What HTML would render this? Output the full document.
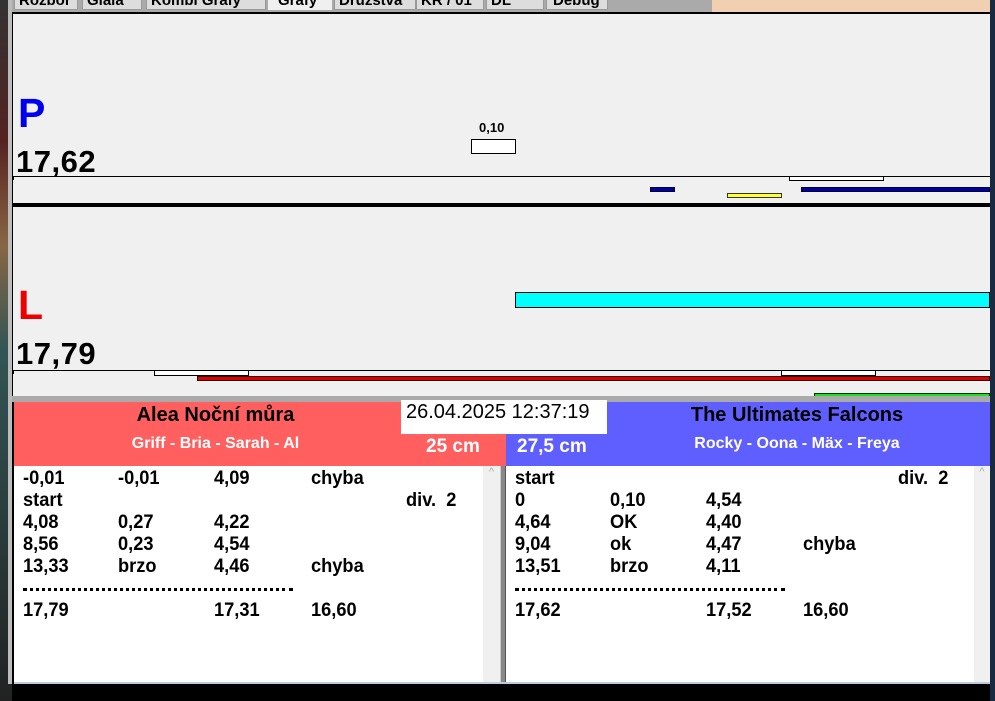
<!DOCTYPE html>
<html><head><meta charset="utf-8"><style>
*{margin:0;padding:0;box-sizing:border-box}
body{width:995px;height:701px;background:#000;position:relative;overflow:hidden;font-family:"Liberation Sans",Arial,sans-serif}
.a{position:absolute}
.b{font-weight:bold}
.row{position:absolute;font-weight:bold;font-size:19px;color:#000;white-space:nowrap;transform:scaleX(0.96);transform-origin:left}
</style></head><body>
<div class="a" style="left:0;top:0;width:12px;height:701px;background:linear-gradient(#333,#522 20%,#864 35%,#355 50%,#222)"></div>
<div class="a" style="left:8px;top:0;width:4px;height:684px;background:#bbb"></div>
<div class="a" style="left:12px;top:0;width:978px;height:12px;background:#aaa"></div>
<div class="a" style="left:712px;top:0;width:278px;height:12px;background:#f0d0b0"></div>
<div class="a" style="left:14px;top:0;width:698px;height:10px;font-size:15px;font-weight:bold;overflow:hidden">
<span class="a" style="left:0;top:-9px;width:64px;height:19px;background:#ddd;border:1px solid #999;padding-left:4px">Rozbor</span>
<span class="a" style="left:68px;top:-9px;width:60px;height:19px;background:#ddd;border:1px solid #999;padding-left:4px">Glala</span>
<span class="a" style="left:132px;top:-9px;width:120px;height:19px;background:#ddd;border:1px solid #999;padding-left:4px">Kombi Grafy</span>
<span class="a" style="left:254px;top:-8px;width:64px;height:20px;background:#f0f0f0;padding-left:10px">Grafy</span>
<span class="a" style="left:320px;top:-9px;width:82px;height:19px;background:#ddd;border:1px solid #999;padding-left:4px">Družstva</span>
<span class="a" style="left:402px;top:-9px;width:68px;height:19px;background:#ddd;border:1px solid #999;padding-left:4px">KR / 01</span>
<span class="a" style="left:472px;top:-9px;width:58px;height:19px;background:#ddd;border:1px solid #999;padding-left:4px">DL</span>
<span class="a" style="left:532px;top:-9px;width:62px;height:19px;background:#ddd;border:1px solid #999;padding-left:6px">Debug</span>
</div>
<div class="a" style="left:990px;top:0;width:5px;height:701px;background:#1a2a40"></div>
<!-- charts -->
<div class="a" style="left:12px;top:12px;width:978px;height:384px;background:#f0f0f0;border-top:2px solid #000;border-left:1px solid #000"></div>
<div class="a b" style="left:18px;top:89px;font-size:41px;color:#0000ee;line-height:48px">P</div>
<div class="a b" style="left:16px;top:144px;font-size:31px;line-height:36px;letter-spacing:0.5px">17,62</div>
<div class="a b" style="left:479px;top:120px;font-size:13px">0,10</div>
<div class="a" style="left:471px;top:139px;width:45px;height:15px;background:#fff;border:1px solid #000"></div>
<div class="a" style="left:13px;top:176px;width:977px;height:1px;background:#000"></div>
<div class="a" style="left:13px;top:176px;width:1px;height:4px;background:#000"></div>
<div class="a" style="left:789px;top:176px;width:95px;height:5px;background:#fff;border:1px solid #000"></div>
<div class="a" style="left:650px;top:187px;width:25px;height:5px;background:#0000aa;border:1px solid #002"></div>
<div class="a" style="left:801px;top:187px;width:189px;height:5px;background:#0000aa;border:1px solid #002"></div>
<div class="a" style="left:727px;top:193px;width:55px;height:5px;background:#ffff33;border:1px solid #333"></div>
<div class="a" style="left:12px;top:203px;width:978px;height:4px;background:#000"></div>
<div class="a b" style="left:18px;top:281px;font-size:41px;color:#ee0000;line-height:48px">L</div>
<div class="a b" style="left:16px;top:336px;font-size:31px;line-height:36px;letter-spacing:0.5px">17,79</div>
<div class="a" style="left:515px;top:292px;width:475px;height:16px;background:#00ffff;border:1px solid #000"></div>
<div class="a" style="left:13px;top:370px;width:977px;height:1px;background:#000"></div>
<div class="a" style="left:13px;top:370px;width:1px;height:4px;background:#000"></div>
<div class="a" style="left:154px;top:370px;width:95px;height:6px;background:#fff;border:1px solid #000"></div>
<div class="a" style="left:781px;top:370px;width:95px;height:6px;background:#fff;border:1px solid #000"></div>
<div class="a" style="left:197px;top:376px;width:793px;height:5px;background:#dd0000;border:1px solid #300"></div>
<div class="a" style="left:814px;top:393px;width:176px;height:5px;background:#22dd22;border:1px solid #030"></div>
<div class="a" style="left:12px;top:396px;width:978px;height:6px;background:#aaa"></div>
<!-- headers -->
<div class="a" style="left:14px;top:402px;width:492px;height:64px;background:#ff5f5f"></div>
<div class="a" style="left:506px;top:402px;width:484px;height:64px;background:#5f5fff"></div>
<div class="a b" style="left:14px;top:404px;width:403px;text-align:center;font-size:20px">Alea Noční můra</div>
<div class="a b" style="left:14px;top:435px;width:403px;text-align:center;font-size:16px;color:#fff">Griff - Bria - Sarah - Al</div>
<div class="a" style="left:401px;top:400px;width:206px;height:34px;background:#fff;font-size:20px;padding:1px 0 0 5px">26.04.2025 12:37:19</div>
<div class="a b" style="left:426px;top:436px;font-size:19px;color:#fff">25 cm</div>
<div class="a b" style="left:517px;top:436px;font-size:19px;color:#fff">27,5 cm</div>
<div class="a b" style="left:604px;top:404px;width:386px;text-align:center;font-size:20px;color:#000">The Ultimates Falcons</div>
<div class="a b" style="left:604px;top:435px;width:386px;text-align:center;font-size:16px;color:#fff">Rocky - Oona - Mäx - Freya</div>
<!-- lists -->
<div class="a" style="left:14px;top:466px;width:486px;height:218px;background:#fff"></div>
<div class="a" style="left:483px;top:466px;width:17px;height:218px;background:#f0f0f0;color:#aaa;font-size:11px;text-align:center">^</div>
<div class="a" style="left:500px;top:466px;width:6px;height:218px;background:#888;border-left:1px solid #ccc;border-right:1px solid #555"></div>
<div class="a" style="left:506px;top:466px;width:484px;height:218px;background:#fff"></div>
<div class="a" style="left:974px;top:466px;width:16px;height:218px;background:#f0f0f0;color:#aaa;font-size:11px;text-align:center">^</div>
<div class="a" style="left:14px;top:682px;width:976px;height:2px;background:#bcd"></div>

<div class="row" style="left:23px;top:468px">-0,01</div><div class="row" style="left:118px;top:468px">-0,01</div><div class="row" style="left:214px;top:468px">4,09</div><div class="row" style="left:311px;top:468px">chyba</div>
<div class="row" style="left:23px;top:490px">start</div><div class="row" style="left:406px;top:490px">div.&nbsp; 2</div>
<div class="row" style="left:23px;top:512px">4,08</div><div class="row" style="left:118px;top:512px">0,27</div><div class="row" style="left:214px;top:512px">4,22</div>
<div class="row" style="left:23px;top:534px">8,56</div><div class="row" style="left:118px;top:534px">0,23</div><div class="row" style="left:214px;top:534px">4,54</div>
<div class="row" style="left:23px;top:556px">13,33</div><div class="row" style="left:118px;top:556px">brzo</div><div class="row" style="left:214px;top:556px">4,46</div><div class="row" style="left:311px;top:556px">chyba</div>
<div class="a" style="left:23px;top:588px;width:270px;height:0;border-top:3px dotted #000"></div>
<div class="row" style="left:23px;top:600px">17,79</div><div class="row" style="left:214px;top:600px">17,31</div><div class="row" style="left:311px;top:600px">16,60</div>

<div class="row" style="left:515px;top:468px">start</div><div class="row" style="left:898px;top:468px">div.&nbsp; 2</div>
<div class="row" style="left:515px;top:490px">0</div><div class="row" style="left:610px;top:490px">0,10</div><div class="row" style="left:706px;top:490px">4,54</div>
<div class="row" style="left:515px;top:512px">4,64</div><div class="row" style="left:610px;top:512px">OK</div><div class="row" style="left:706px;top:512px">4,40</div>
<div class="row" style="left:515px;top:534px">9,04</div><div class="row" style="left:610px;top:534px">ok</div><div class="row" style="left:706px;top:534px">4,47</div><div class="row" style="left:803px;top:534px">chyba</div>
<div class="row" style="left:515px;top:556px">13,51</div><div class="row" style="left:610px;top:556px">brzo</div><div class="row" style="left:706px;top:556px">4,11</div>
<div class="a" style="left:515px;top:588px;width:270px;height:0;border-top:3px dotted #000"></div>
<div class="row" style="left:515px;top:600px">17,62</div><div class="row" style="left:706px;top:600px">17,52</div><div class="row" style="left:803px;top:600px">16,60</div>
</body></html>
